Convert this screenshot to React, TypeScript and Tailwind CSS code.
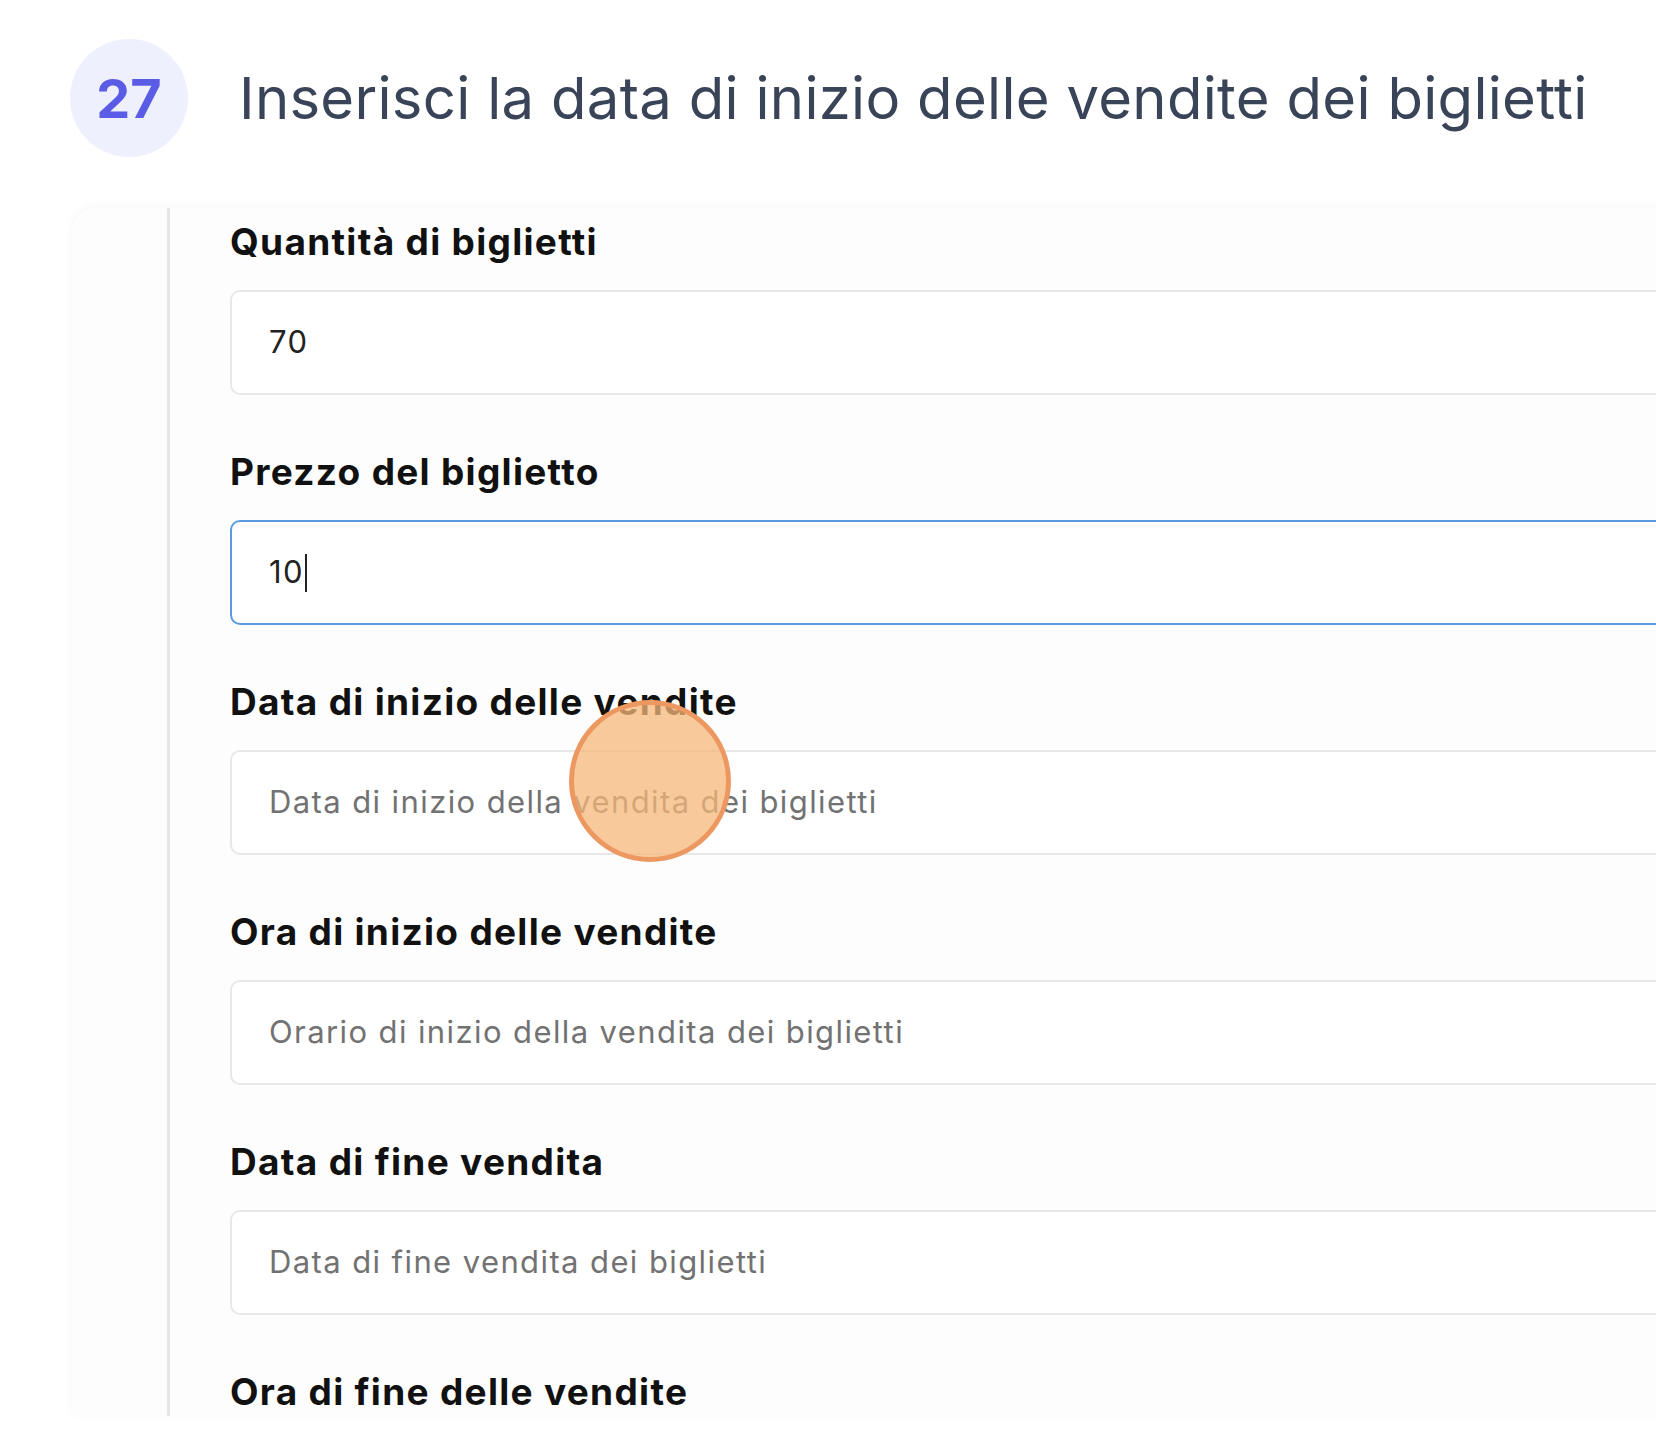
import React from "react";

const fields = [
  { label: "Quantità di biglietti", value: "70", placeholder: "", focus: false },
  { label: "Prezzo del biglietto", value: "10", placeholder: "", focus: true },
  { label: "Data di inizio delle vendite", value: "", placeholder: "Data di inizio della vendita dei biglietti", focus: false },
  { label: "Ora di inizio delle vendite", value: "", placeholder: "Orario di inizio della vendita dei biglietti", focus: false },
  { label: "Data di fine vendita", value: "", placeholder: "Data di fine vendita dei biglietti", focus: false },
];

export default function App() {
  return (
    <div className="relative h-[1430px] w-[1656px] overflow-hidden bg-white">
      <div className="flex items-center pl-[70px] pt-[39px]">
        <div className="flex h-[118px] w-[118px] items-center justify-center rounded-full bg-[#eef0fd]">
          <span className="font-['Inter'] text-[54px] font-bold text-[#5b5ce6]">27</span>
        </div>
        <h1 className="ml-[51px] font-['Inter'] text-[58px] font-normal tracking-[0.3px] text-[#3a4458]">
          Inserisci la data di inizio delle vendite dei biglietti
        </h1>
      </div>

      <div className="ml-[72px] mt-[51px] flex w-[1700px] rounded-tl-[24px] bg-[#fdfdfd] shadow-[0_-2px_8px_rgba(0,0,0,0.04)]">
        <div className="w-[95px] shrink-0" />
        <div className="w-[3px] shrink-0 bg-[#e6e6e6]" />
        <div className="flex flex-1 flex-col pl-[60px] pt-[10px]">
          {fields.map((f) => (
            <div key={f.label} className="flex h-[230px] flex-col">
              <div className="flex h-[48px] items-center font-['Inter'] text-[37px] font-bold tracking-[1.3px] text-[#111]">
                {f.label}
              </div>
              <div
                className={
                  "mt-[24px] flex h-[105px] items-center rounded-[10px] border-2 bg-white pl-[37px] font-['Inter'] text-[31px] tracking-[1.4px] " +
                  (f.focus ? "border-[#5a9be0]" : "border-[#e8e8e8]")
                }
              >
                {f.value ? (
                  <span className="flex items-center text-[#222]">
                    {f.value}
                    {f.focus && <span className="ml-[1px] inline-block h-[38px] w-[2px] bg-[#222]" />}
                  </span>
                ) : (
                  <span className="text-[#727272]">{f.placeholder}</span>
                )}
              </div>
            </div>
          ))}
          <div className="flex h-[48px] items-center font-['Inter'] text-[37px] font-bold tracking-[1.3px] text-[#111]">
            Ora di fine delle vendite
          </div>
        </div>
      </div>

      <div className="pointer-events-none absolute left-[569px] top-[700px] h-[162px] w-[162px] rounded-full border-[5px] border-[#ec9860] bg-[#f5b87a]/75" />
    </div>
  );
}
